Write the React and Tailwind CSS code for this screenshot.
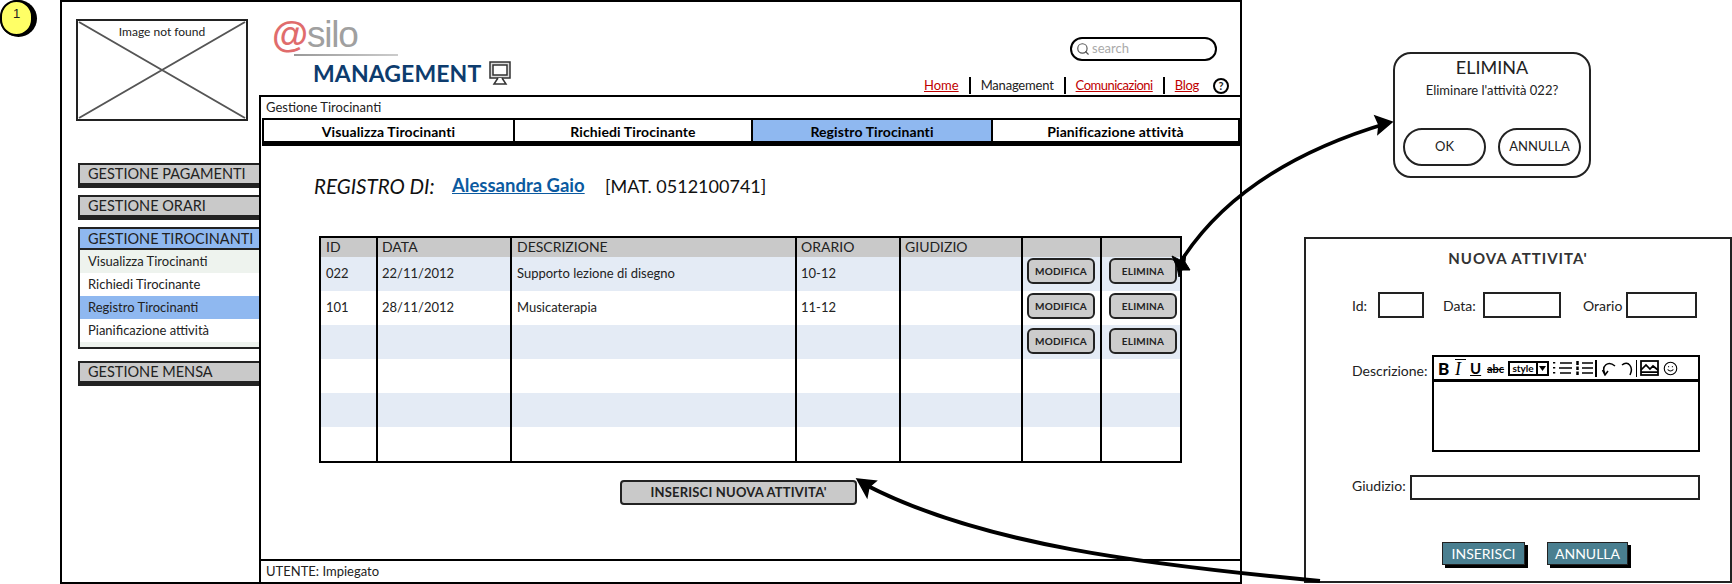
import React from "react";
import { Search, Smile } from "lucide-react";

const FONT = "font-['Lato','Noto_Sans',sans-serif]";

const menuHead = "h-[25px] border-2 border-b-[5px] border-r-0 border-[#222] pl-2 flex items-center text-[14.5px] text-[#222]";

const columns = "grid grid-cols-[57px_134px_285px_104px_122px_79px_78px]";
const cell = "border-r-2 border-black last:border-r-0";

const rows = [
  { id: "022", date: "22/11/2012", text: "Supporto lezione di disegno", time: "10-12", buttons: true, pad: "pt-px", bg: "bg-[#e4ebf5]" },
  { id: "101", date: "28/11/2012", text: "Musicaterapia", time: "11-12", buttons: true, pad: "pt-[2px]", bg: "bg-white" },
  { buttons: true, pad: "pt-[3px]", bg: "bg-[#e4ebf5]" },
  { bg: "bg-white" },
  { bg: "bg-[#e4ebf5]" },
  { bg: "bg-white" },
];

const tabs = [
  { name: "Visualizza Tirocinanti", w: "w-[251px]" },
  { name: "Richiedi Tirocinante", w: "w-[238px]" },
  { name: "Registro Tirocinanti", w: "w-[240px]", active: true },
  { name: "Pianificazione attività", w: "w-[249px]" },
];

const TableButton = ({ label, className }) => (
  <div className={`w-[68px] h-[26px] rounded-md border-[2.5px] border-[#222] bg-[#cccccc] flex items-center justify-center text-[10px] font-bold tracking-[0.2px] text-[#222] ${className}`}>
    {label}
  </div>
);

const Monitor = () => (
  <svg width="22" height="24" viewBox="0 0 22 24" fill="none" stroke="#333" strokeWidth="1.5">
    <rect x="1" y="1" width="20" height="16" fill="#ddd" />
    <rect x="4" y="4" width="14" height="10" fill="#fff" />
    <path d="M9 17 L5 23 H17 L13 17" fill="#fff" />
  </svg>
);

const Toolbar = () => (
  <div className="h-[27px] border-2 border-b-[3px] border-black flex items-center text-black">
    <span className="ml-[4px] w-[11px] font-black text-[17px] leading-none">B</span>
    <span className="ml-[6px] w-[11px] italic text-[18px] leading-none font-['Liberation_Serif',serif] border-t border-black">I</span>
    <span className="ml-[4px] w-[11px] font-bold text-[15px] leading-none underline">U</span>
    <span className="ml-[6px] w-[17px] text-[11px] font-bold leading-none line-through">abc</span>
    <div className="ml-[4px] w-[41px] flex h-[15px] border-2 border-black items-center text-[10px] leading-none font-bold">
      <span className="flex-1 text-center">style</span>
      <span className="border-l-2 border-black h-full w-[11px] flex items-center justify-center">
        <svg width="7" height="5" viewBox="0 0 7 5"><path d="M0 0H7L3.5 5Z" fill="#000" /></svg>
      </span>
    </div>
    <svg className="ml-[4px]" width="20" height="16" viewBox="0 0 20 16" fill="none" stroke="#000" strokeWidth="1.5">
      <path d="M1 2 V3.5 M1 7 V8.5 M1 12 V13.5" strokeWidth="2.5" />
      <path d="M7 3 H19 M6 8 H19 M7 13 H18" />
    </svg>
    <svg className="ml-[3px]" width="18" height="16" viewBox="0 0 18 16" fill="none" stroke="#000" strokeWidth="1.5">
      <path d="M1.5 1 V5 M1.5 6.5 V10 M1.5 11.5 V15" strokeWidth="2.5" />
      <path d="M6 3 H17 M6 8 H17 M6 13 H17" />
    </svg>
    <div className="ml-[1px] w-[2px] h-[17px] bg-black" />
    <svg className="ml-[5px]" width="14" height="16" viewBox="0 0 14 16" fill="none" stroke="#000" strokeWidth="1.5">
      <path d="M3 14 C-1 6 6 0 13 6" />
      <path d="M0.5 10 L3 15 L6 11" />
    </svg>
    <svg className="ml-[5px]" width="12" height="16" viewBox="0 0 12 16" fill="none" stroke="#000" strokeWidth="1.5">
      <path d="M9 15 C13 7 7 0 1 5" />
    </svg>
    <div className="ml-[3px] w-px h-[17px] bg-black" />
    <svg className="ml-[3px]" width="19" height="16" viewBox="0 0 19 16" fill="none" stroke="#000" strokeWidth="1.75">
      <rect x="1" y="1" width="17" height="14" />
      <path d="M1 10 L6 5 L10 9 L13 6 L18 10 M1 12 H18" />
    </svg>
    <Smile className="ml-[4px]" size={15} strokeWidth={1.75} />
  </div>
);

const App = () => {
  return (
    <div className={`relative w-[1732px] h-[584px] bg-white overflow-hidden text-[13px] text-[#222] ${FONT}`}>
      {/* Note badge */}
      <div className="absolute left-0 top-0 w-[37px] h-[37px] rounded-full bg-black">
        <div className="w-[33px] h-[36px] rounded-full bg-[#ffff66] border-2 border-black flex items-center justify-center pb-2 text-[13px] font-['Liberation_Sans',sans-serif]">
          1
        </div>
      </div>

      {/* Main window */}
      <div className="absolute left-[60px] top-0 w-[1182px] h-[584px] border-2 border-black flex">
        {/* Sidebar */}
        <div className="w-[197px] shrink-0 pl-4 pt-[17px]">
          <div className="relative -ml-[2px] w-[172px] h-[102px] border-2 border-[#222] flex justify-center pt-[2px]">
            <svg className="absolute inset-0 w-full h-full" viewBox="0 0 168 98" fill="none" stroke="#555" strokeWidth="2">
              <path d="M1 1 L167 97 M167 1 L1 97" />
            </svg>
            <span className="relative text-[12px]">Image not found</span>
          </div>

          <div className={`${menuHead} bg-[#c9c9c9] mt-[42px]`}>GESTIONE PAGAMENTI</div>
          <div className={`${menuHead} bg-[#c9c9c9] mt-[7px]`}>GESTIONE ORARI</div>
          <div className="mt-[7px] h-[122px] border-2 border-r-0 border-[#222] flex flex-col">
            <div className="h-[21px] shrink-0 bg-[#8fb8f0] border-b-2 border-[#222] pl-2 flex items-center text-[14.5px]">
              GESTIONE TIROCINANTI
            </div>
            <div className="h-[23px] bg-[#eef3ee] pl-2 flex items-center">Visualizza Tirocinanti</div>
            <div className="h-[23px] pl-2 flex items-center">Richiedi Tirocinante</div>
            <div className="h-[23px] bg-[#8fb8f0] pl-2 flex items-center">Registro Tirocinanti</div>
            <div className="h-[23px] pl-2 flex items-center">Pianificazione attività</div>
            <div className="flex-1 bg-[#eef3ee]" />
          </div>
          <div className={`${menuHead} bg-[#c9c9c9] mt-[12px]`}>GESTIONE MENSA</div>
        </div>

        {/* Right side */}
        <div className="flex-1 flex flex-col min-w-0">
          {/* Header */}
          <div className="h-[93px] shrink-0 flex justify-between">
            <div className="pl-[13px] pt-[13px]">
              <div className="relative h-[40px] text-[37px] leading-[40px] tracking-[-1.2px] font-['Liberation_Sans',sans-serif] whitespace-nowrap">
                <span className="text-[#e06c6c] font-bold">@</span>
                <span className="text-[#a0a0a0]">silo</span>
                <div className="absolute left-[22px] top-[39px] w-[104px] h-[2px] bg-linear-to-r from-[#999] to-[#ccc]" />
              </div>
              <div className="flex items-center gap-2 pl-[41px] mt-[4px]">
                <span className="text-[23px] leading-[28px] font-bold text-[#0d3c6e] tracking-[0.1px]">MANAGEMENT</span>
                <Monitor />
              </div>
            </div>
            <div className="flex flex-col items-end pr-[11px] pt-[35px]">
              <div className="w-[147px] h-[24px] mr-3 rounded-full border-2 border-black flex items-center pl-1 gap-[2px] text-[#aaa] text-[13px]">
                <Search size={14} strokeWidth={2} className="text-[#555]" />
                search
              </div>
              <div className="flex items-center mt-[16px] h-[17px]">
                <span className="text-[#c00000] underline pr-[10px] border-r-2 border-black leading-[17px]">Home</span>
                <span className="px-[10px] tracking-[-0.2px] border-r-2 border-black leading-[17px]">Management</span>
                <span className="text-[#c00000] underline px-[10px] tracking-[-0.5px] border-r-2 border-black leading-[17px]">Comunicazioni</span>
                <span className="text-[#c00000] underline pl-[10px] tracking-[-0.3px] leading-[17px]">Blog</span>
                <span className="ml-[14px] w-[16px] h-[16px] rounded-full border-2 border-black flex items-center justify-center text-[11px] font-bold leading-none">?</span>
              </div>
            </div>
          </div>

          {/* Panel */}
          <div className="flex-1 flex flex-col border-t-2 border-l-2 border-black min-h-0">
            <div className="h-[21px] shrink-0 pl-[5px] flex items-center">Gestione Tirocinanti</div>

            <div className="flex ml-px h-[28px] shrink-0 font-bold text-[14px] tracking-[0.1px] text-black">
              {tabs.map((tab) => (
                <div
                  key={tab.name}
                  className={`${tab.w} border-t-2 border-b-[5px] border-l-2 border-black last:border-r-2 flex items-center justify-center pt-px ${tab.active ? "bg-[#8fb8f0]" : "bg-white"}`}
                >
                  {tab.name}
                </div>
              ))}
            </div>

            <div className="flex items-center h-[28px] mt-[26px] pl-[53px] text-[19px] text-[#111]">
              <span className="italic w-[138px] text-[20.5px]">REGISTRO DI:</span>
              <span className="text-[#0b5aa0] font-bold underline w-[153px] text-[18.5px]">Alessandra Gaio</span>
              <span className="text-[18px]">[MAT. 0512100741]</span>
            </div>

            {/* Table */}
            <div className="ml-[58px] mt-[36px] w-[863px] border-2 border-black">
              <div className={`${columns} h-[19px] bg-[#c9c9c9] text-[14px] leading-[17px]`}>
                <div className={`${cell} pl-[5px]`}>ID</div>
                <div className={`${cell} pl-[4px]`}>DATA</div>
                <div className={`${cell} pl-[5px]`}>DESCRIZIONE</div>
                <div className={`${cell} pl-[4px]`}>ORARIO</div>
                <div className={`${cell} pl-[4px]`}>GIUDIZIO</div>
                <div className={cell} />
                <div className={cell} />
              </div>
              {rows.map((row, i) => (
                <div key={i} className={`${columns} h-[34px] ${row.bg}`}>
                  <div className={`${cell} pl-[5px] flex items-center`}>{row.id}</div>
                  <div className={`${cell} pl-[4px] flex items-center`}>{row.date}</div>
                  <div className={`${cell} pl-[5px] flex items-center`}>{row.text}</div>
                  <div className={`${cell} pl-[4px] flex items-center`}>{row.time}</div>
                  <div className={cell} />
                  <div className={`${cell} ${row.pad || ""}`}>{row.buttons && <TableButton label="MODIFICA" className="ml-[4px]" />}</div>
                  <div className={`${cell} ${row.pad || ""}`}>{row.buttons && <TableButton label="ELIMINA" className="ml-[7px]" />}</div>
                </div>
              ))}
            </div>

            <div className="ml-[359px] mt-[17px] w-[237px] h-[25px] rounded-[4px] border-[2.5px] border-[#222] bg-[#c9c9c9] flex items-center justify-center font-bold text-[13px] tracking-[0.2px]">
              INSERISCI NUOVA ATTIVITA'
            </div>

            <div className="mt-auto h-[23px] shrink-0 border-t-2 border-black pl-[5px] flex items-center">UTENTE: Impiegato</div>
          </div>
        </div>
      </div>

      {/* Delete dialog */}
      <div className="absolute left-[1393px] top-[52px] w-[198px] h-[126px] rounded-[18px] border-2 border-[#222] flex flex-col items-center bg-white">
        <div className="text-[18px] leading-[22px] mt-[2px]">ELIMINA</div>
        <div className="text-[13px] leading-[18px] mt-[3px]">Eliminare l'attività 022?</div>
        <div className="flex gap-3 mt-[29px]">
          <div className="w-[83px] h-[38px] rounded-[19px] border-2 border-[#222] flex items-center justify-center">OK</div>
          <div className="w-[83px] h-[38px] rounded-[19px] border-2 border-[#222] flex items-center justify-center">ANNULLA</div>
        </div>
      </div>

      {/* New activity form */}
      <div className="absolute left-[1304px] top-[237px] w-[428px] h-[346px] border-2 border-[#222] bg-white text-[14px]">
        <div className="mt-[9px] h-[20px] leading-[20px] text-center font-bold text-[15px] tracking-[1px] text-[#333]">NUOVA ATTIVITA'</div>

        <div className="flex items-center ml-[46px] mt-[24px] h-[26px]">
          <span className="w-[26px]">Id:</span>
          <div className="w-[46px] h-[26px] border-2 border-[#222]" />
          <span className="w-[40px] ml-[19px]">Data:</span>
          <div className="w-[78px] h-[26px] border-2 border-[#222]" />
          <span className="w-[43px] ml-[22px]">Orario</span>
          <div className="w-[71px] h-[26px] border-2 border-[#222]" />
        </div>

        <div className="flex ml-[46px] mt-[37px]">
          <span className="w-[80px] pt-[5px]">Descrizione:</span>
          <div className="w-[268px]">
            <Toolbar />
            <div className="h-[70px] border-2 border-t-0 border-black" />
          </div>
        </div>

        <div className="flex items-center ml-[46px] mt-[23px]">
          <span className="w-[58px] pb-[4px]">Giudizio:</span>
          <div className="w-[290px] h-[25px] border-2 border-[#222]" />
        </div>

        <div className="flex ml-[136px] mt-[42px] gap-[22px] text-white">
          <div className="w-[83px] h-[23px] bg-[#4a7f90] border border-[#222] shadow-[3px_3px_0_#000] flex items-center justify-center">INSERISCI</div>
          <div className="w-[81px] h-[23px] bg-[#4a7f90] border border-[#222] shadow-[3px_3px_0_#000] flex items-center justify-center">ANNULLA</div>
        </div>
      </div>

      {/* Connector arrows */}
      <svg className="absolute inset-0 pointer-events-none" width="1732" height="584" viewBox="0 0 1732 584" fill="none" stroke="#000" strokeWidth="3.5">
        <path d="M1178 266 C1215 205 1280 155 1388 123" />
        <path d="M1392 122 L1375 116 L1379 125 L1378 134 Z" fill="#000" strokeWidth="1.5" />
        <path d="M1177 267 L1172 256 L1180 260 L1186 252 L1185 262 L1190 270 L1182 270 L1179 277 Z" fill="#000" strokeWidth="1" />
        <path d="M1320 581 C1150 565 980 545 864 484" strokeWidth="4" />
        <path d="M857 479 L876 481 L869 487 L867 497 Z" fill="#000" strokeWidth="1.5" />
      </svg>
    </div>
  );
};

export default App;
